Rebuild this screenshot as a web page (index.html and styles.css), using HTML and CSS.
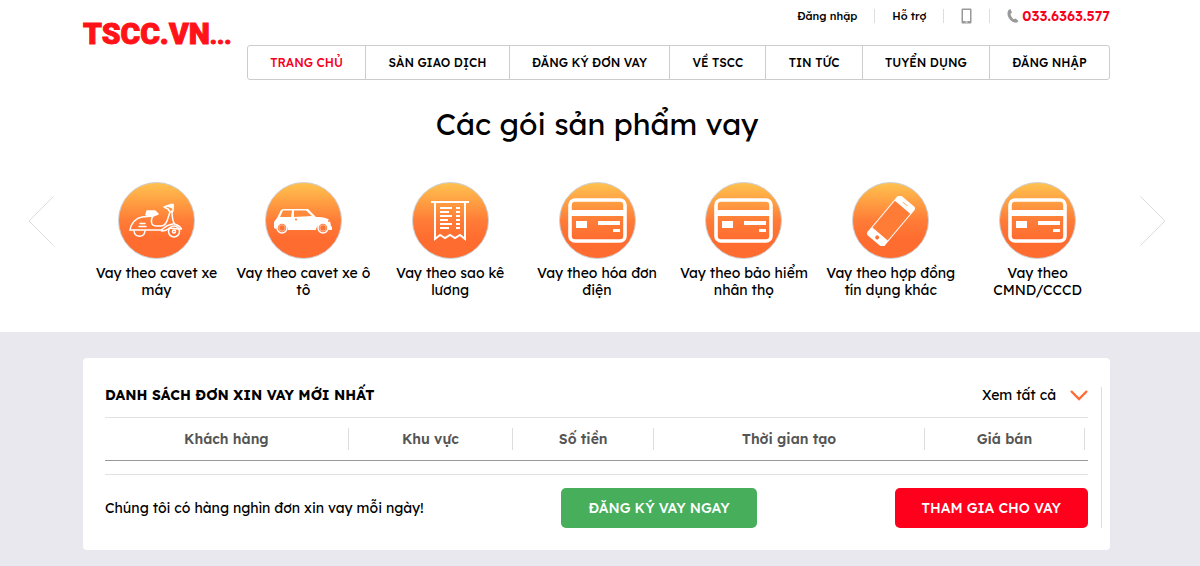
FILE: index.html
```
<!DOCTYPE html>
<html lang="vi">
<head>
    <meta charset="UTF-8">
    <meta name="viewport" content="width=device-width, initial-scale=1.0">
    <title>TSCC.VN</title>
    <link rel="stylesheet" href="styles.css">
</head>
<body>
    <!-- shared icon shapes -->
    <svg class="defs" width="0" height="0" aria-hidden="true">
        <symbol id="card" viewBox="0 0 59 45">
            <rect x="2" y="2" width="55" height="41" rx="5" fill="none" stroke="#fff" stroke-width="3.600"/>
            <path d="M2 12h55v6H2zM8 23h11v7H8zM30 23h22v4H30zM45 31h7v3h-7z" fill="#fff"/>
        </symbol>
    </svg>

    <header class="header">
        <a class="logo" href="#">TSCC.VN<span class="logo-dots">...</span></a>
        <div class="header-right">
            <div class="top-links">
                <a href="#">Đăng nhập</a>
                <a href="#">Hỗ trợ</a>
                <a href="#" aria-label="Mobile">
                    <svg width="11" height="16" viewBox="0 0 11 16"><path d="M1.500 .5h8a1 1 0 0 1 1 1v13a1 1 0 0 1-1 1h-8a1 1 0 0 1-1-1v-13a1 1 0 0 1 1-1z" fill="#999"/><path d="M2 2h7v11H2z" fill="#fff"/><path d="M4.500 14h2" stroke="#fff"/></svg>
                </a>
                <a class="hotline" href="tel:0336363577">
                    <svg width="12" height="14" viewBox="0 0 12 14"><path d="M1.500 1 3.500 0 5 3.500 3.500 5C4 7.500 5 9 6.800 10.300L8.600 9.500 11.500 12 10 13.600C4 14.500-2 6 1.500 1z" fill="#999"/></svg>
                    033.6363.577
                </a>
            </div>
            <nav class="menu">
                <a class="active" href="#">TRANG CHỦ</a>
                <a href="#">SÀN GIAO DỊCH</a>
                <a href="#">ĐĂNG KÝ ĐƠN VAY</a>
                <a href="#">VỀ TSCC</a>
                <a href="#">TIN TỨC</a>
                <a href="#">TUYỂN DỤNG</a>
                <a href="#">ĐĂNG NHẬP</a>
            </nav>
        </div>
    </header>

    <section class="products">
        <h1>Các gói sản phẩm vay</h1>
        <div class="slider">
            <button class="arrow" type="button" aria-label="Trước">
                <svg width="26" height="50" viewBox="0 0 26 50"><path d="M25.500 .5 1 25l24.500 24.500" fill="none" stroke="#ddd"/></svg>
            </button>
            <div class="slides">
                <a class="product" href="#">
                    <span class="circle">
                        <svg width="54" height="36" viewBox="0 0 54 36" fill="none" stroke="#fff" stroke-width="1.500" stroke-linejoin="round" stroke-linecap="round">
                            <path d="M1 27C2 20 7 15 13 14l11-1c-2 3-2 5-1 8 1 2 3 2 5 2h4c4 0 6-4 7-8l2-6"/>
                            <path d="M1 27h31c3-1 4-4 8-5l4-1M43 8c0 5 0 9 2.500 13 3 1 6 3 7 5-5 0-9-1-12-1-2 1-2 3-8 3"/>
                            <path d="M17 12l1-4h8l3 3-5 2z" fill="#fff"/>
                            <path d="M35 4l7-2.500h2V8l-3 1-2-3z"/>
                            <path d="M39 3l5-1.500V5z" fill="#fff"/>
                            <path d="M11 20.500h5M10 23.500h7"/>
                            <path d="M5 28c1 7 10 7 11 0"/>
                            <circle cx="45" cy="28.500" r="5.500"/>
                            <circle cx="45" cy="28.500" r="1.500"/>
                        </svg>
                    </span>
                    Vay theo cavet xe máy
                </a>
                <a class="product" href="#">
                    <span class="circle">
                        <svg width="60" height="26" viewBox="0 0 60 26">
                            <path d="M4 10 8 2Q9 1 12 1h23l8 8c8 0 12 1 14 4l1 5 1 1v3h-4c0-4-3-6-6-6s-6 3-6 6H15c0-4-3-6-6-6s-5 2-6 5l-2-1V14z" fill="#fff"/>
                            <path d="M10 2.500h9l-1 6.500H7zM21 2.500h12l6 5.500-18 1z" fill="#ff8a3c"/>
                            <circle cx="9" cy="20" r="5" fill="#ff7434" stroke="#fff" stroke-width="1.500"/>
                            <circle cx="50" cy="20" r="5" fill="#ff7434" stroke="#fff" stroke-width="1.500"/>
                            <circle cx="9" cy="20" r="3.200" fill="none" stroke="#fff" stroke-width=".5"/>
                            <circle cx="50" cy="20" r="3.200" fill="none" stroke="#fff" stroke-width=".5"/>
                            <circle cx="23" cy="11.500" r="1" fill="#ff7434"/>
                            <circle cx="56" cy="13" r="1" fill="#ff7434"/>
                        </svg>
                    </span>
                    Vay theo cavet xe ô tô
                </a>
                <a class="product" href="#">
                    <span class="circle">
                        <svg width="38" height="42" viewBox="0 0 38 42" fill="none" stroke="#fff" stroke-width="2">
                            <path d="M0 2h38M4 2v37l5-4 5 3 5-3 5 3 5-3 5 4V2"/>
                            <path d="M9 8h12M9 12h9M9 16h12M9 20h8M9 24h12M9 28h9M25 8h4M25 12h4M25 16h4M25 20h4M25 24h4M25 28h4"/>
                        </svg>
                    </span>
                    Vay theo sao kê lương
                </a>
                <a class="product" href="#">
                    <span class="circle"><svg width="59" height="45"><use href="#card"/></svg></span>
                    Vay theo hóa đơn điện
                </a>
                <a class="product" href="#">
                    <span class="circle"><svg width="59" height="45"><use href="#card"/></svg></span>
                    Vay theo bảo hiểm nhân thọ
                </a>
                <a class="product" href="#">
                    <span class="circle">
                        <svg width="48" height="50" viewBox="0 0 48 50">
                            <g transform="rotate(40 24 25)">
                                <rect x="13" y="-1" width="22" height="52" rx="3" fill="#fff"/>
                                <path d="M14 7h20v35H14z" fill="#ff7c37"/>
                                <circle cx="24" cy="46.500" r="2" fill="#ff7434"/>
                                <path d="M21 3h6" stroke="#ffb27c"/>
                            </g>
                        </svg>
                    </span>
                    Vay theo hợp đồng tín dụng khác
                </a>
                <a class="product" href="#">
                    <span class="circle"><svg width="59" height="45"><use href="#card"/></svg></span>
                    Vay theo CMND/CCCD
                </a>
            </div>
            <button class="arrow" type="button" aria-label="Sau">
                <svg width="26" height="50" viewBox="0 0 26 50"><path d="M.5 .5 25 25 .5 49.500" fill="none" stroke="#ddd"/></svg>
            </button>
        </div>
    </section>

    <section class="loans">
        <div class="box">
            <div class="box-inner">
                <div class="box-head">
                    <h2>DANH SÁCH ĐƠN XIN VAY MỚI NHẤT</h2>
                    <a href="#">Xem tất cả
                        <svg width="18" height="11" viewBox="0 0 18 11"><path d="M1 1 9 9 17 1" fill="none" stroke="#ff6a35" stroke-width="2.400"/></svg>
                    </a>
                </div>
                <table class="loan-table">
                    <thead>
                        <tr>
                            <th class="col-customer"><span>Khách hàng</span></th>
                            <th class="col-area"><span>Khu vực</span></th>
                            <th class="col-amount"><span>Số tiền</span></th>
                            <th class="col-time"><span>Thời gian tạo</span></th>
                            <th class="col-price"><span>Giá bán</span></th>
                        </tr>
                    </thead>
                </table>
                <div class="box-foot">
                    <p>Chúng tôi có hàng nghìn đơn xin vay mỗi ngày!</p>
                    <button class="btn btn-green" type="button">ĐĂNG KÝ VAY NGAY</button>
                    <button class="btn btn-red" type="button">THAM GIA CHO VAY</button>
                </div>
            </div>
        </div>
    </section>
</body>
</html>
```
FILE: styles.css
```
* {
    box-sizing: border-box;
}

body {
    margin: 0;
    font-family: Lexend, Inter, sans-serif;
    font-size: 14px;
    font-weight: 400;
    color: #000;
    background-color: #fff;
}

a {
    color: inherit;
    text-decoration: none;
}

button {
    font-family: inherit;
    cursor: pointer;
}

.defs {
    display: block;
}

/* header */
.header {
    display: flex;
    padding: 0 90px 0 83px;
}

.logo {
    width: 164px;
    padding-top: 14px;
    font-family: Roboto, sans-serif;
    font-size: 30px;
    font-weight: 900;
    line-height: 40px;
    color: #ff1218;
    -webkit-text-stroke: 1px #ff1218;
    white-space: nowrap;
}

.logo-dots {
    font-size: 24px;
}

.header-right {
    flex: 1;
}

.top-links {
    display: flex;
    justify-content: flex-end;
    align-items: center;
    height: 32px;
    margin-bottom: 13px;
    font-size: 11px;
    font-weight: 500;
}

.top-links a {
    display: flex;
    align-items: center;
    height: 14px;
    padding: 0 17px;
    border-left: 1px solid #ddd;
}

.top-links a:first-child {
    border-left: none;
}

.top-links .hotline {
    gap: 3px;
    padding-right: 0;
    font-size: 14px;
    font-weight: 600;
    color: #f5001d;
}

.menu {
    display: flex;
    height: 35px;
    border: 1px solid #ccc;
    border-radius: 3px;
}

.menu a {
    flex: 1 1 auto;
    border-left: 1px solid #ccc;
    padding: 0 21px;
    font-size: 12px;
    font-weight: 500;
    line-height: 33px;
    text-align: center;
}

.menu a:first-child {
    border-left: none;
}

.menu .active {
    color: #f5001d;
}

/* products */
.products {
    padding: 24px 34px 33px 28px;
}

.products h1 {
    margin: 0 0 38px;
    font-size: 30px;
    font-weight: 400;
    line-height: 40px;
    text-align: center;
}

.slider {
    display: flex;
    align-items: flex-start;
}

.arrow {
    width: 26px;
    margin-top: 14px;
    padding: 0;
    border: none;
    background: none;
}

.arrow svg {
    display: block;
}

.slides {
    display: flex;
    flex: 1;
    padding: 0 29px;
}

.product {
    flex: 1 1 0;
    padding: 0 5px;
    line-height: 17px;
    text-align: center;
}

.circle {
    display: flex;
    justify-content: center;
    align-items: center;
    width: 77px;
    height: 77px;
    margin: 0 auto 6px;
    border: 1px solid #ccc;
    border-radius: 50%;
    background: linear-gradient(#ffc24f, #ff7c37 50%, #ff6c30 75%);
}

/* loan list */
.loans {
    padding: 26px 90px 16px 83px;
    background-color: #e8e8ee;
}

.box {
    padding: 29px 8px 22px 22px;
    border-radius: 4px;
    background-color: #fff;
}

.box-inner {
    padding-right: 13px;
    border-right: 1px solid #ddd;
}

.box-head {
    display: flex;
    justify-content: space-between;
    height: 31px;
    line-height: 17px;
    border-bottom: 1px solid #e2e2e2;
}

.box-head h2 {
    margin: 0;
    font-size: 14px;
    font-weight: 700;
}

.box-head a {
    display: flex;
    align-items: center;
    gap: 14px;
    height: 17px;
}

.loan-table {
    width: 100%;
    margin-bottom: 13px;
    border-collapse: collapse;
    table-layout: fixed;
    border-bottom: 1px solid #999;
}

.loan-table th {
    height: 42px;
    padding: 0;
    font-weight: 600;
    color: #555;
}

.loan-table th span {
    display: block;
    line-height: 22px;
    border-right: 1px solid #ddd;
}

.loan-table th:last-child {
    padding-right: 3px;
}

.col-customer {
    width: 24.8%;
}

.col-area {
    width: 16.7%;
}

.col-amount {
    width: 14.4%;
}

.col-time {
    width: 27.5%;
}

.box-foot {
    display: flex;
    justify-content: space-between;
    align-items: center;
    padding-top: 13px;
    border-top: 1px solid #e2e2e2;
}

.box-foot p {
    margin: 0;
}

.btn {
    height: 40px;
    padding: 0 27px;
    border: none;
    border-radius: 5px;
    font-size: 14px;
    font-weight: 500;
    color: #fff;
}

.btn-green {
    background-color: #47ae5b;
}

.btn-red {
    background-color: #ff001c;
}
```
